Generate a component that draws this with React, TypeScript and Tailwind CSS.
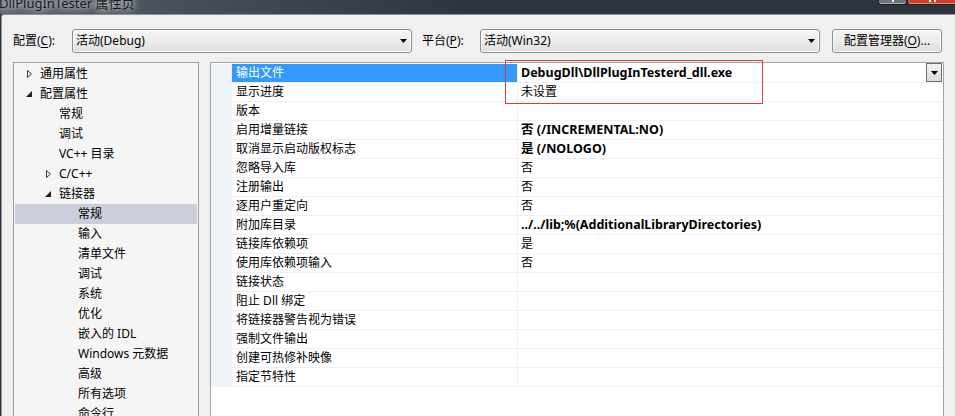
import React from 'react';

type TreeItem = { label: string; level: 0 | 1 | 2; exp?: 'c' | 'e'; selected?: boolean };

const tree: TreeItem[] = [
  { label: '通用属性', level: 0, exp: 'c' },
  { label: '配置属性', level: 0, exp: 'e' },
  { label: '常规', level: 1 },
  { label: '调试', level: 1 },
  { label: 'VC++ 目录', level: 1 },
  { label: 'C/C++', level: 1, exp: 'c' },
  { label: '链接器', level: 1, exp: 'e' },
  { label: '常规', level: 2, selected: true },
  { label: '输入', level: 2 },
  { label: '清单文件', level: 2 },
  { label: '调试', level: 2 },
  { label: '系统', level: 2 },
  { label: '优化', level: 2 },
  { label: '嵌入的 IDL', level: 2 },
  { label: 'Windows 元数据', level: 2 },
  { label: '高级', level: 2 },
  { label: '所有选项', level: 2 },
  { label: '命令行', level: 2 },
];

type Row = { name: string; value: string; bold?: boolean; selected?: boolean };

const rows: Row[] = [
  { name: '输出文件', value: 'DebugDll\\DllPlugInTesterd_dll.exe', bold: true, selected: true },
  { name: '显示进度', value: '未设置' },
  { name: '版本', value: '' },
  { name: '启用增量链接', value: '否 (/INCREMENTAL:NO)', bold: true },
  { name: '取消显示启动版权标志', value: '是 (/NOLOGO)', bold: true },
  { name: '忽略导入库', value: '否' },
  { name: '注册输出', value: '否' },
  { name: '逐用户重定向', value: '否' },
  { name: '附加库目录', value: '../../lib;%(AdditionalLibraryDirectories)', bold: true },
  { name: '链接库依赖项', value: '是' },
  { name: '使用库依赖项输入', value: '否' },
  { name: '链接状态', value: '' },
  { name: '阻止 Dll 绑定', value: '' },
  { name: '将链接器警告视为错误', value: '' },
  { name: '强制文件输出', value: '' },
  { name: '创建可热修补映像', value: '' },
  { name: '指定节特性', value: '' },
];

const indent: Record<number, string> = { 0: 'pl-[11px]', 1: 'pl-[30px]', 2: 'pl-[49px]' };

function Arrow() {
  return (
    <svg width="7" height="4" viewBox="0 0 7 4" className="shrink-0">
      <polygon points="0,0 7,0 3.5,4" fill="#000" />
    </svg>
  );
}

function Combo({ text }: { text: string }) {
  return (
    <div className="w-[340px] h-[24px] rounded-[3px] border border-[#8e8f8f] bg-linear-to-b from-[#f6f6f6] via-[#ececec] to-[#dedede] shadow-[inset_0_0_0_1px_#fbfbfb] flex items-center pl-[3px] pr-[4px]">
      <span className="flex-1">{text}</span>
      <Arrow />
    </div>
  );
}

function Expander({ exp }: { exp?: 'c' | 'e' }) {
  return (
    <svg width="14" height="20" viewBox="0 0 14 20" className="shrink-0 overflow-visible">
      {exp === 'c' && <polygon points="1.5,6.5 1.5,13.5 5.5,10" fill="none" stroke="#3c3c3c" strokeWidth="1" />}
      {exp === 'e' && <polygon points="6,7 6,13 0,13" fill="#1e1e1e" />}
    </svg>
  );
}

export default function App() {
  return (
    <div className="w-[955px] h-[416px] overflow-hidden bg-[#2b343f] font-['Noto_Sans','Noto_Sans_CJK_SC',sans-serif] text-[12px] leading-[16px] text-black">
      {/* title bar */}
      <div className="h-[14px] flex justify-between overflow-hidden bg-linear-to-r from-[#59616b] via-[#2b343f] to-[#2b343f]">
        <div className="-mt-[5px] -ml-[1px] text-[13px] leading-[16px] text-[#1a1a1a] whitespace-nowrap [text-shadow:0_0_6px_#e8eaee,0_0_10px_#c8ccd2]">
          DllPlugInTester 属性页
        </div>
        <div className="flex items-start mr-[-2px]">
          <div className="w-[29px] h-[5px] rounded-b-[3px] border border-t-0 border-[#1c2028] bg-[#6b737d] shadow-[inset_0_-1px_0_#aab1b9] flex justify-center">
            <div className="w-[2px] h-[2px] bg-white" />
          </div>
          <div className="w-[50px] h-[5px] rounded-b-[3px] border border-t-0 border-[#3a1a14] bg-[#c5452c] shadow-[inset_0_-1px_0_#e88a74] flex justify-center gap-[3px]">
            <div className="w-[2px] h-[2px] bg-white" />
            <div className="w-[2px] h-[2px] bg-white" />
          </div>
        </div>
      </div>

      {/* window body */}
      <div className="relative h-[402px] ml-[1px] border-l border-t border-[#8c939b] rounded-tl-[3px] bg-[#f0f0f0] pl-[11px]">
        {/* config row */}
        <div className="flex items-center pt-[14px]">
          <div className="w-[59px]">
            配置(<span className="underline underline-offset-2">C</span>):
          </div>
          <Combo text="活动(Debug)" />
          <div className="ml-[10px] w-[58px]">
            平台(<span className="underline underline-offset-2">P</span>):
          </div>
          <Combo text="活动(Win32)" />
          <div className="ml-[12px] w-[110px] h-[24px] rounded-[3px] border border-[#8e8f8f] bg-linear-to-b from-[#f6f6f6] via-[#ececec] to-[#dedede] shadow-[inset_0_0_0_1px_#fbfbfb] flex items-center justify-center">
            配置管理器(<span className="underline underline-offset-2">O</span>)...
          </div>
        </div>

        {/* main area */}
        <div className="flex mt-[9px] gap-[11px]">
          {/* tree */}
          <div className="w-[186px] h-[360px] border border-b-0 border-[#9a9ea6] bg-[#f5f5f5] pt-[1px] pl-[1px] pr-[1px] overflow-hidden">
            {tree.map((t, i) => (
              <div
                key={i}
                className={`h-[20px] flex items-center ${indent[t.level]} ${t.selected ? 'bg-[#cbcdda]' : ''}`}
              >
                <Expander exp={t.exp} />
                <span className="whitespace-nowrap">{t.label}</span>
              </div>
            ))}
          </div>

          {/* property grid */}
          <div className="w-[734px] h-[360px] border border-b-0 border-[#a0a4aa] bg-white pt-[1px] overflow-hidden">
            {rows.map((r, i) => (
              <div key={i} className="flex h-[19px]">
                <div className="w-[21px] bg-[#eff3fa]" />
                <div className="flex w-[711px] border-b border-[#eef0f3]">
                  <div
                    className={`w-[286px] pl-[4px] border-r border-[#eef0f3] flex items-center whitespace-nowrap ${
                      r.selected ? 'bg-[#3399ff] text-white' : ''
                    }`}
                  >
                    {r.name}
                  </div>
                  <div className={`flex-1 pl-[3px] flex items-center whitespace-nowrap ${r.bold ? 'font-bold text-[12.5px]' : ''}`}>
                    <span className="flex-1">{r.value}</span>
                    {r.selected && (
                      <div className="self-start -mt-[1px] mr-[1px] w-[16px] h-[19px] border border-[#6f6f6f] bg-linear-to-b from-[#f2f2f2] to-[#dcdcdc] flex items-center justify-center">
                        <Arrow />
                      </div>
                    )}
                  </div>
                </div>
              </div>
            ))}
          </div>
        </div>

        {/* red highlight box */}
        <div className="absolute left-[503px] top-[45px] w-[258px] h-[44px] border border-[#e23a3a]" />
      </div>
    </div>
  );
}
